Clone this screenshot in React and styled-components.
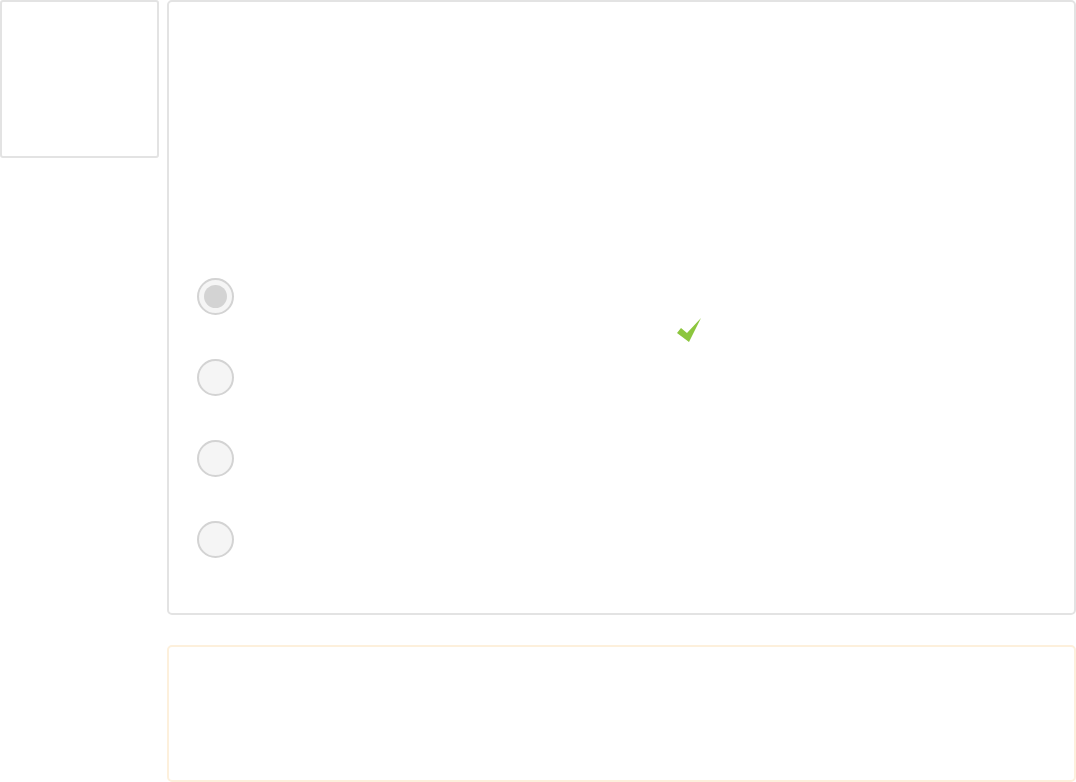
import React from 'react'
import styled, { createGlobalStyle } from 'styled-components'

const GlobalStyle = createGlobalStyle`
    html, body {
        margin: 0;
        padding: 0;
        background: #ffffff;
        font-family: "Liberation Sans", Arial, sans-serif;
    }
`

const Page = styled.div`
    display: flex;
    gap: 8px;
    width: 1076px;
    height: 782px;
    box-sizing: border-box;
`

const Sidebar = styled.aside`
    width: 159px;
    flex: none;
`

const SideCard = styled.div`
    height: 158px;
    box-sizing: border-box;
    border: 2px solid #e3e3e3;
    border-radius: 3px;
`

const Main = styled.main`
    flex: 1;
    display: flex;
    flex-direction: column;
    gap: 30px;
`

const QuestionPanel = styled.section`
    height: 615px;
    box-sizing: border-box;
    border: 2px solid #e3e3e3;
    border-radius: 5px;
    padding: 276px 0 0 28px;
`

const Options = styled.ul`
    list-style: none;
    margin: 0;
    padding: 0;
    display: flex;
    flex-direction: column;
    gap: 44px;
`

const Option = styled.li`
    position: relative;
    display: flex;
    align-items: center;
    height: 37px;
`

const Radio = styled.span`
    width: 37px;
    height: 37px;
    box-sizing: border-box;
    border-radius: 50%;
    border: 2px solid #d3d3d3;
    background: #f5f5f5;
    display: flex;
    align-items: center;
    justify-content: center;

    &::after {
        content: '';
        display: ${p => (p.$checked ? 'block' : 'none')};
        width: 23px;
        height: 23px;
        border-radius: 50%;
        background: #d3d3d3;
    }
`

const Correct = styled.svg`
    position: absolute;
    left: 480px;
    top: 40px;
    width: 24px;
    height: 24px;
`

const FeedbackPanel = styled.section`
    flex: 1;
    box-sizing: border-box;
    border: 2px solid #fdf0dc;
    border-radius: 5px;
`

const options = [
    { id: 'a', checked: true, correct: true },
    { id: 'b' },
    { id: 'c' },
    { id: 'd' },
]

const App = () => {
    return (
        <>
            <GlobalStyle />
            <Page>
                <Sidebar>
                    <SideCard />
                </Sidebar>
                <Main>
                    <QuestionPanel>
                        <Options>
                            {options.map(o => (
                                <Option key={o.id}>
                                    <Radio $checked={o.checked} />
                                    {o.correct && (
                                        <Correct viewBox="0 0 24 24">
                                            <polygon points="0,15 4,10 10,15 24,0 12,24" fill="#8cc63e" />
                                        </Correct>
                                    )}
                                </Option>
                            ))}
                        </Options>
                    </QuestionPanel>
                    <FeedbackPanel />
                </Main>
            </Page>
        </>
    )
}

export default App
